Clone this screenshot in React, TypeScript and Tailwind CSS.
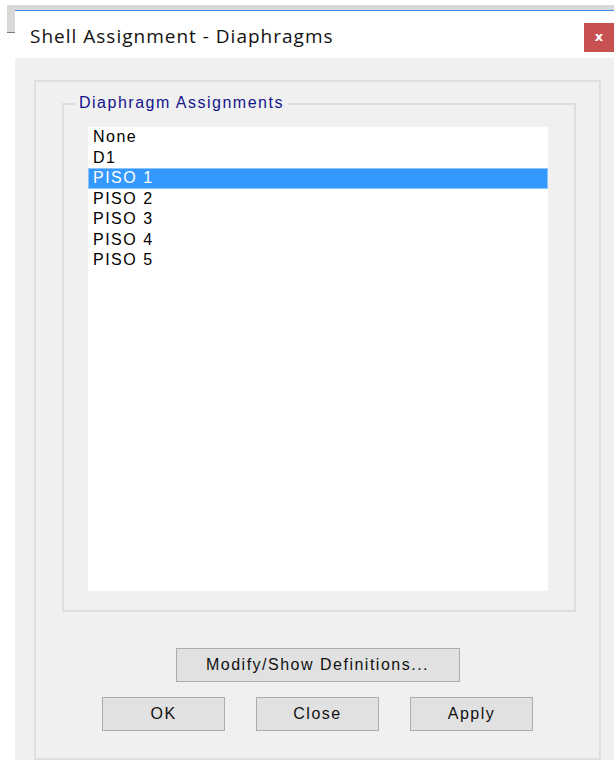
import { useState } from 'react';

const items = ['None', 'D1', 'PISO 1', 'PISO 2', 'PISO 3', 'PISO 4', 'PISO 5'];

const classic = { fontFamily: '"Liberation Sans", Arial, sans-serif' };

function DialogButton({ label, className }: { label: string; className: string }) {
  return (
    <button
      type="button"
      className={`h-[34px] border border-[#adadad] bg-[#e1e1e1] text-[16px] tracking-[1.5px] text-[#111] ${className}`}
      style={classic}
    >
      {label}
    </button>
  );
}

export default function App() {
  const [selected, setSelected] = useState('PISO 1');

  return (
    <div className="h-[760px] w-[614px] overflow-hidden bg-white">
      <div className="flex pl-[7px] pt-[5px]">
        {/* edge of the window underneath */}
        <div className="flex w-[8px] flex-col">
          <div className="h-[27px] bg-[#d9d9d9]" />
          <div className="h-px bg-[#7a7a7a]" />
        </div>

        <div className="flex flex-1 flex-col">
          <div className="h-[5px] bg-[#d9d9d9]" />
          <div className="h-px bg-[#3a8ae4]" />

          {/* title bar */}
          <div className="flex h-[47px]">
            <div
              className="pl-[15px] pt-[11px] text-[19px] tracking-[1px] text-[#111]"
              style={{ fontFamily: '"Open Sans", "Noto Sans", sans-serif' }}
            >
              Shell Assignment - Diaphragms
            </div>
            <div
              className="ml-auto mt-[12px] flex h-[29px] w-[30px] items-center justify-center bg-[#c75050] pb-[2px] text-[13px] font-bold text-white"
              style={{ fontFamily: '"DejaVu Sans", sans-serif' }}
            >
              x
            </div>
          </div>

          {/* window body */}
          <div className="h-[702px] bg-[#f0f0f0] pl-[19px] pr-[13px] pt-[22px]">
            <div className="flex h-[680px] w-[567px] flex-col border-2 border-[#dedede]">
              <div className="relative ml-[26px] mt-[21px] h-[509px] w-[514px] border-2 border-[#dedede]">
                <span
                  className="absolute left-[11px] top-[-12px] bg-[#f0f0f0] px-[4px] text-[16px] leading-[20px] tracking-[1.5px] text-[#14148c]"
                  style={classic}
                >
                  Diaphragm Assignments
                </span>
                <ul
                  className="ml-[24px] mt-[22px] h-[464px] w-[460px] bg-white text-[16px] tracking-[1.5px] text-black"
                  style={classic}
                >
                  {items.map((it) => (
                    <li
                      key={it}
                      onClick={() => setSelected(it)}
                      className={
                        it === selected
                          ? 'flex h-[20.5px] items-center border border-[#8cc4ff] bg-[#3399ff] pl-[4px] text-white'
                          : 'flex h-[20.5px] items-center pl-[5px]'
                      }
                    >
                      {it}
                    </li>
                  ))}
                </ul>
              </div>

              <DialogButton label="Modify/Show Definitions..." className="mt-[36px] w-[284px] self-center" />

              <div className="mt-[15px] flex justify-center gap-[31px]">
                <DialogButton label="OK" className="w-[123px]" />
                <DialogButton label="Close" className="w-[123px]" />
                <DialogButton label="Apply" className="w-[123px]" />
              </div>
            </div>
          </div>
        </div>
      </div>
    </div>
  );
}
